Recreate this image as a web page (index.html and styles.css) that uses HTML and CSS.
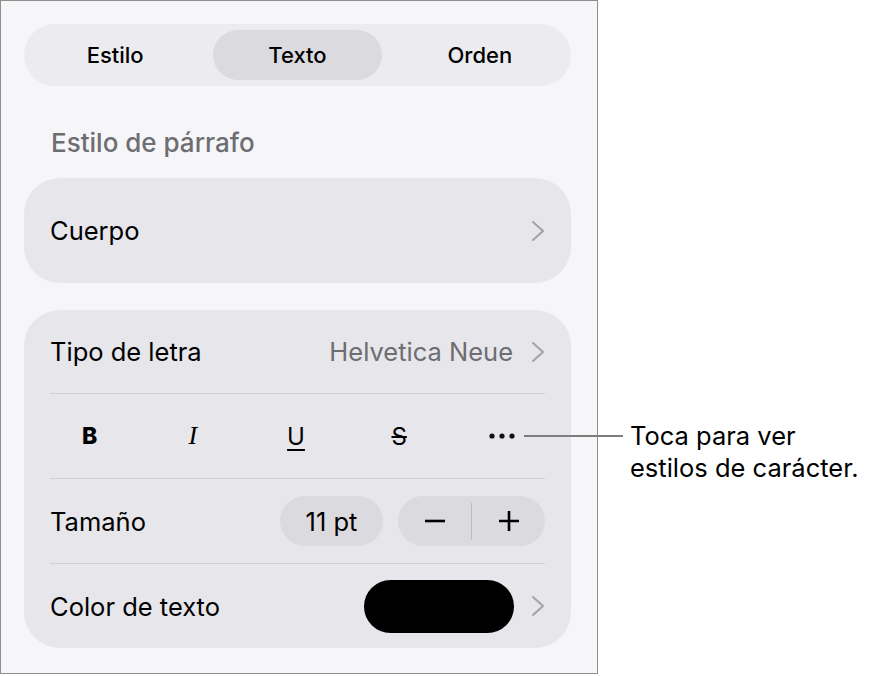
FILE: index.html
```html
<!DOCTYPE html>
<html lang="es">
	<head>
		<meta charset="UTF-8">
		<title>Texto</title>
		<link rel="stylesheet" href="styles.css">
	</head>
	<body>
		<div class="page">
			<div class="panel">
				<div class="segmented">
					<div class="seg">Estilo</div>
					<div class="seg active">Texto</div>
					<div class="seg">Orden</div>
				</div>

				<div class="section-title">Estilo de párrafo</div>

				<div class="card">
					<div class="row row-tall">
						<span class="label">Cuerpo</span>
						<svg class="chev" width="14" height="22" viewBox="0 0 14 22"><path d="M2 2 L12 11 L2 20"/></svg>
					</div>
				</div>

				<div class="card">
					<div class="row row-first">
						<span class="label">Tipo de letra</span>
						<span class="value">Helvetica Neue</span>
						<svg class="chev" width="14" height="22" viewBox="0 0 14 22"><path d="M2 2 L12 11 L2 20"/></svg>
					</div>
					<div class="row">
						<div class="styles">
							<span class="st st-bold">B</span>
							<span class="st st-italic">I</span>
							<span class="st st-under">U</span>
							<span class="st st-strike">S</span>
							<span class="st">
								<svg width="26" height="6" viewBox="0 0 26 6"><circle cx="3" cy="3" r="2.6"/><circle cx="13" cy="3" r="2.6"/><circle cx="23" cy="3" r="2.6"/></svg>
							</span>
						</div>
					</div>
					<div class="row">
						<span class="label">Tamaño</span>
						<span class="size">11 pt</span>
						<div class="stepper">
							<span class="step">
								<svg width="22" height="22" viewBox="0 0 22 22"><path d="M1 11 H21"/></svg>
							</span>
							<span class="step-sep"></span>
							<span class="step">
								<svg width="22" height="22" viewBox="0 0 22 22"><path d="M1 11 H21 M11 1 V21"/></svg>
							</span>
						</div>
					</div>
					<div class="row">
						<span class="label">Color de texto</span>
						<span class="swatch"></span>
						<svg class="chev" width="14" height="22" viewBox="0 0 14 22"><path d="M2 2 L12 11 L2 20"/></svg>
					</div>
				</div>
			</div>

			<div class="callout">
				<span class="callout-line"></span>
				<p>Toca para ver<br>estilos de carácter.</p>
			</div>
		</div>
	</body>
</html>
```

FILE: styles.css
```css
:root{
	--panel-bg:#f6f6f8;
	--card-bg:#e6e6eb;
	--seg-bg:#ececf0;
	--pill-bg:#dadadf;
	--gray-text:#6d6d72;
	--chev-color:#a2a2a7;
}
body{
	margin:0;
	background-color:#fff;
	font-family:Inter, "Noto Sans", sans-serif;
	color:#000;
}
.page{
	position:relative;
	width:878px;
	height:676px;
}
.panel{
	box-sizing:border-box;
	width:598px;
	height:674px;
	border:1px solid #8f8f8f;
	background-color:var(--panel-bg);
	padding:23px 26px 0 23px;
}

/* segmented control */
.segmented{
	box-sizing:border-box;
	height:62px;
	padding:6px 0;
	border-radius:31px;
	background-color:var(--seg-bg);
	display:grid;
	grid-template-columns:repeat(3, 1fr);
}
.seg{
	margin:0 7px;
	border-radius:25px;
	display:flex;
	align-items:center;
	justify-content:center;
	font-size:22px;
	font-weight:500;
}
.seg.active{
	background-color:var(--pill-bg);
}

.section-title{
	margin:42px 0 20px 27px;
	font-size:26px;
	font-weight:500;
	line-height:30px;
	color:var(--gray-text);
}

/* cards and rows */
.card{
	background-color:var(--card-bg);
	border-radius:36px;
	padding:0 26px 0 26px;
}
.card + .card{
	margin-top:27px;
}
.row{
	box-sizing:border-box;
	height:85px;
	display:flex;
	align-items:center;
	font-size:25.5px;
}
.row + .row{
	border-top:1px solid #cfcfd4;
}
.row-first{
	height:83px;
}
.row-tall{
	height:105px;
}
.label{
	flex:1;
}
.value{
	color:var(--gray-text);
	margin-right:18px;
}
.chev{
	display:block;
}
.chev path{
	fill:none;
	stroke:var(--chev-color);
	stroke-width:2;
	stroke-linecap:round;
	stroke-linejoin:round;
}

/* character style buttons */
.styles{
	flex:1;
	margin:0 -9px 0 -12px;
	display:grid;
	grid-template-columns:repeat(5, 1fr);
}
.st{
	display:flex;
	align-items:center;
	justify-content:center;
	height:40px;
	font-size:24px;
}
.st-bold{
	font-weight:800;
	font-size:23px;
}
.st-italic{
	font-family:"Liberation Serif", serif;
	font-style:italic;
	font-size:26px;
}
.st-under{
	text-decoration:underline;
	text-decoration-thickness:2px;
	text-underline-offset:4px;
}
.st-strike{
	text-decoration:line-through;
	text-decoration-thickness:2px;
}
.st circle{
	fill:#111;
}

/* size stepper */
.size{
	width:103px;
	height:50px;
	border-radius:25px;
	background-color:var(--pill-bg);
	display:flex;
	align-items:center;
	justify-content:center;
}
.stepper{
	margin-left:15px;
	width:147px;
	height:50px;
	border-radius:25px;
	background-color:var(--pill-bg);
	display:flex;
	align-items:center;
}
.step{
	flex:1;
	display:flex;
	justify-content:center;
}
.step path{
	stroke:#000;
	stroke-width:2.6;
	fill:none;
}
.step-sep{
	width:1px;
	height:37px;
	background-color:#bcbcc1;
}
.swatch{
	width:150px;
	height:53px;
	border-radius:27px;
	background-color:#000;
	margin-right:17px;
}

/* annotation */
.callout{
	position:absolute;
	left:524px;
	top:420px;
	display:flex;
	align-items:flex-start;
}
.callout-line{
	width:99px;
	height:2px;
	margin-top:15px;
	background-color:#7d7d7d;
}
.callout p{
	margin:0 0 0 7px;
	font-size:25.5px;
	line-height:32px;
}
```
